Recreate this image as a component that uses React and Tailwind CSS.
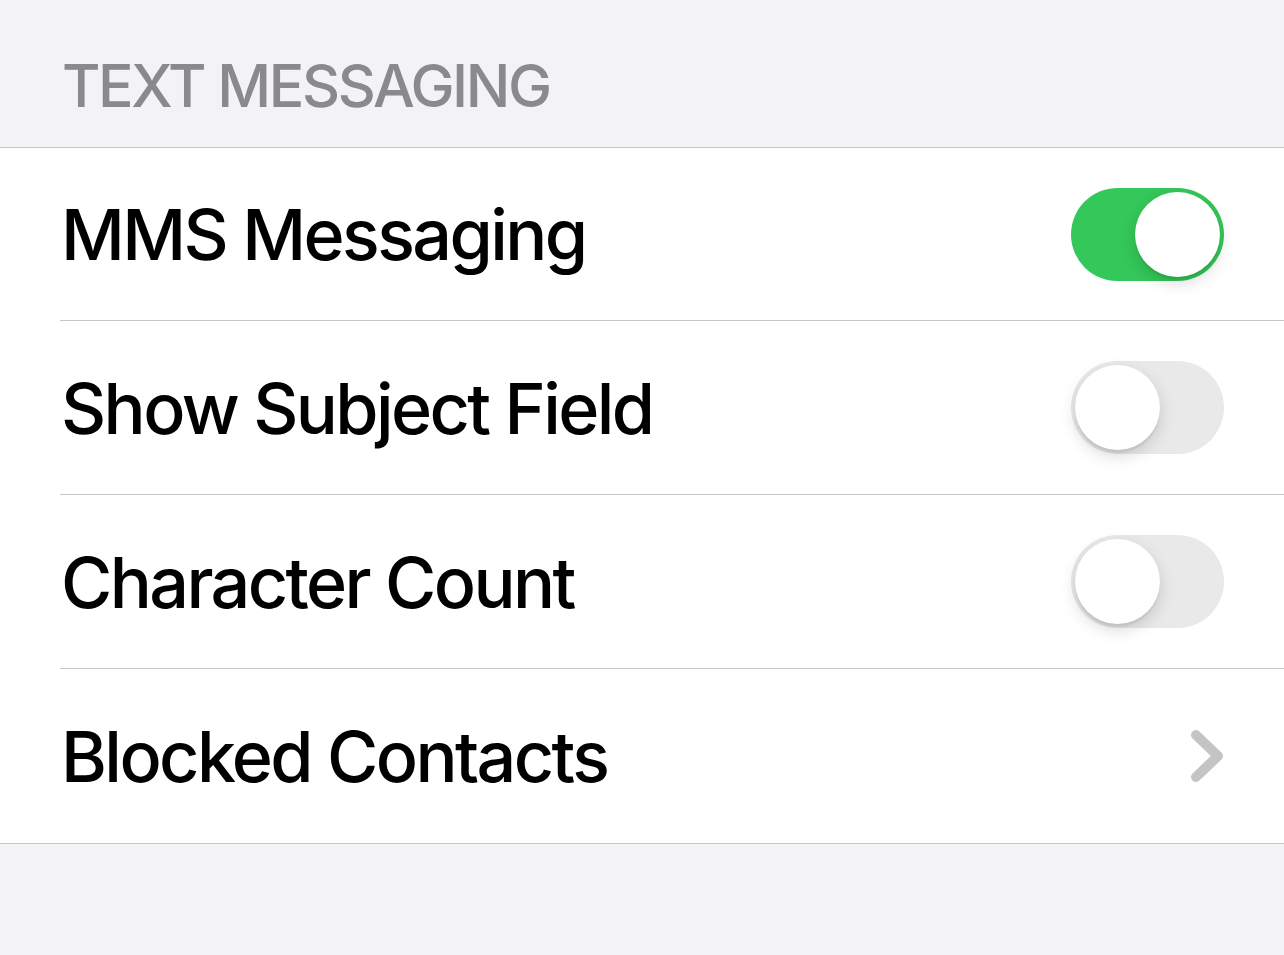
import React from "react";

function Toggle({ on }) {
  return (
    <div
      className={
        "relative w-[153px] h-[93px] rounded-full shrink-0 " +
        (on ? "bg-[#34c759]" : "bg-[#e9e9ea]")
      }
    >
      <div
        className={
          "absolute top-[4px] w-[85px] h-[85px] rounded-full bg-white shadow-[0_6px_16px_rgba(0,0,0,0.15),0_3px_1px_rgba(0,0,0,0.06)] " +
          (on ? "left-[64px]" : "left-[4px]")
        }
      />
    </div>
  );
}

function Chevron() {
  return (
    <svg width="40" height="58" viewBox="0 0 40 58" className="shrink-0 mr-[-4px]">
      <path
        d="M8 8 L30 29 L8 50"
        fill="none"
        stroke="#c4c4c7"
        strokeWidth="10"
        strokeLinecap="round"
        strokeLinejoin="round"
      />
    </svg>
  );
}

function Row({ label, right, last, first }) {
  return (
    <div className="pl-[60px] bg-white">
      <div
        className={
          "flex items-center justify-between pr-[60px] " +
          (first ? "h-[173px] " : "h-[174px] ") +
          (last ? "" : "border-b border-[#c6c6c8]")
        }
      >
        <span className="pl-[1px] pt-[2px] text-[70px] leading-none text-black tracking-[-2.6px] font-medium">
          {label}
        </span>
        {right}
      </div>
    </div>
  );
}

export default function App() {
  return (
    <div
      className="w-[1284px] h-[955px] bg-[#f2f2f7] overflow-hidden"
      style={{ fontFamily: "Inter, 'Noto Sans', sans-serif" }}
    >
      <div className="h-[148px] border-b border-[#c6c6c8] flex items-end pl-[62px] pb-[32px]">
        <span className="text-[59px] leading-none text-[#8a8a8e] font-medium tracking-[-2.4px]">
          TEXT MESSAGING
        </span>
      </div>
      <div className="border-b border-[#c6c6c8]">
        <Row label="MMS Messaging" right={<Toggle on />} first />
        <Row label="Show Subject Field" right={<Toggle />} />
        <Row label="Character Count" right={<Toggle />} />
        <Row label="Blocked Contacts" right={<Chevron />} last />
      </div>
    </div>
  );
}
